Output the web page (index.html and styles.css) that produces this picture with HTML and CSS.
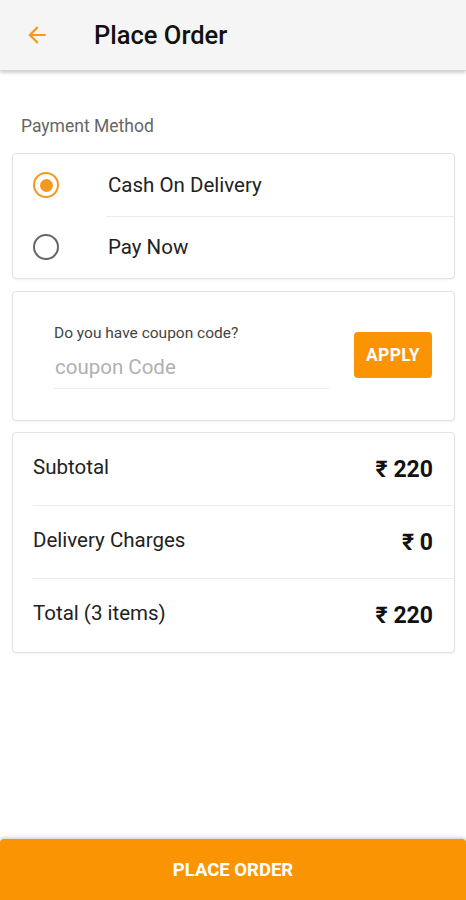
FILE: index.html
```html
<!DOCTYPE html>
<html lang="en">
  <head>
    <meta charset="UTF-8" />
    <meta name="viewport" content="width=device-width, initial-scale=1.0" />
    <title>Place Order</title>
    <link rel="stylesheet" href="styles.css">
  </head>
  <body>
    <header class="topbar">
      <span class="back">
        <svg width="26" height="26" viewBox="0 0 24 24">
          <path d="M20 11H7.83l5.59-5.59L12 4l-8 8 8 8 1.41-1.41L7.83 13H20v-2z" fill="#f39a1e"/>
        </svg>
      </span>
      <h1>Place Order</h1>
    </header>

    <main class="content">
      <p class="section-label">Payment Method</p>

      <section class="card pay-card">
        <label class="pay-row">
          <span class="radio checked"></span>
          <span class="pay-text">Cash On Delivery</span>
        </label>
        <label class="pay-row">
          <span class="radio"></span>
          <span class="pay-text">Pay Now</span>
        </label>
      </section>

      <section class="card coupon-card">
        <div class="coupon-field">
          <span class="coupon-label">Do you have coupon code?</span>
          <input type="text" class="coupon-input" placeholder="coupon Code" />
        </div>
        <button class="apply">APPLY</button>
      </section>

      <section class="card totals">
        <div class="total-row">
          <span>Subtotal</span>
          <strong>₹ 220</strong>
        </div>
        <div class="total-row">
          <span>Delivery Charges</span>
          <strong>₹ 0</strong>
        </div>
        <div class="total-row">
          <span>Total (3 items)</span>
          <strong>₹ 220</strong>
        </div>
      </section>
    </main>

    <button class="place-order">PLACE ORDER</button>
  </body>
</html>
```

FILE: styles.css
```css
body {
  margin: 0;
  font-family: Roboto, "Noto Sans", Arial, sans-serif;
  background-color: #fff;
  color: #1c1c1c;
  height: 900px;
  position: relative;
}
.topbar {
  height: 70px;
  background-color: #f5f5f5;
  display: flex;
  align-items: center;
  box-shadow: 0 2px 3px rgba(0, 0, 0, 0.18);
  border-bottom: 1px solid #d6d6d6;
}
.back {
  display: flex;
  margin-left: 24px;
  width: 26px;
}
.topbar h1 {
  margin: 0 0 0 44px;
  font-size: 25.5px;
  font-weight: 500;
  color: #111;
  padding-bottom: 1px;
}
.content {
  padding: 0 11px 0 12px;
}
.section-label {
  margin: 45px 0 0 9px;
  font-size: 17.5px;
  color: #666;
  height: 37px;
}
.card {
  border: 1px solid #e3e3e3;
  border-radius: 4px;
  background-color: #fff;
  box-shadow: 0 1px 2px rgba(0, 0, 0, 0.06);
  margin-bottom: 12px;
}
.pay-card {
  height: 124px;
  display: flex;
  flex-direction: column;
}
.pay-row {
  display: flex;
  align-items: center;
  height: 62px;
  position: relative;
}
.pay-row + .pay-row::before {
  content: "";
  position: absolute;
  top: 0;
  left: 93px;
  right: 0;
  border-top: 1px solid #ececec;
}
.radio {
  border: 2px solid #666;
  border-radius: 50%;
  margin-left: 20px;
  box-sizing: border-box;
  width: 26px;
  height: 26px;
  display: flex;
  align-items: center;
  justify-content: center;
}
.radio.checked {
  border-color: #f39a1e;
}
.radio.checked::after {
  content: "";
  width: 13px;
  height: 13px;
  border-radius: 50%;
  background-color: #f39a1e;
}
.pay-text {
  margin-left: 49px;
  font-size: 20.5px;
  color: #222;
}
.coupon-card {
  height: 128px;
  margin-bottom: 11px;
  display: flex;
  align-items: flex-start;
  justify-content: space-between;
  padding: 0 22px 0 41px;
}
.coupon-field {
  display: flex;
  flex-direction: column;
  width: 275px;
  margin-top: 32px;
}
.coupon-label {
  font-size: 15.5px;
  color: #444;
}
.coupon-input {
  border: none;
  border-bottom: 1px solid #ececec;
  outline: none;
  font-family: inherit;
  font-size: 20.5px;
  padding: 13px 0 9px 1px;
  color: #333;
  background: transparent;
}
.coupon-input::placeholder {
  color: #b0b0b0;
}
.apply {
  margin-top: 40px;
  width: 78px;
  height: 46px;
  border: none;
  border-radius: 4px;
  background-color: #fb9403;
  color: #fff;
  font-family: inherit;
  font-weight: 700;
  font-size: 17.5px;
  letter-spacing: 0.3px;
  padding: 0;
}
.totals {
  padding: 0 0 1px 20px;
}
.total-row {
  display: flex;
  justify-content: space-between;
  align-items: center;
  height: 72px;
  padding-right: 21px;
  font-size: 20.5px;
  color: #222;
}
.total-row span {
  margin-top: -5px;
}
.total-row + .total-row {
  border-top: 1px solid #ececec;
}
.total-row strong {
  font-size: 23px;
  font-weight: 700;
  color: #111;
}
.place-order {
  position: absolute;
  left: 0;
  right: 0;
  bottom: 0;
  height: 61px;
  width: 100%;
  border: none;
  border-radius: 4px 4px 0 0;
  background-color: #fb9403;
  color: #fff;
  font-family: inherit;
  font-weight: 700;
  font-size: 18.5px;
  box-shadow: 0 -2px 3px rgba(0, 0, 0, 0.15);
}
```
